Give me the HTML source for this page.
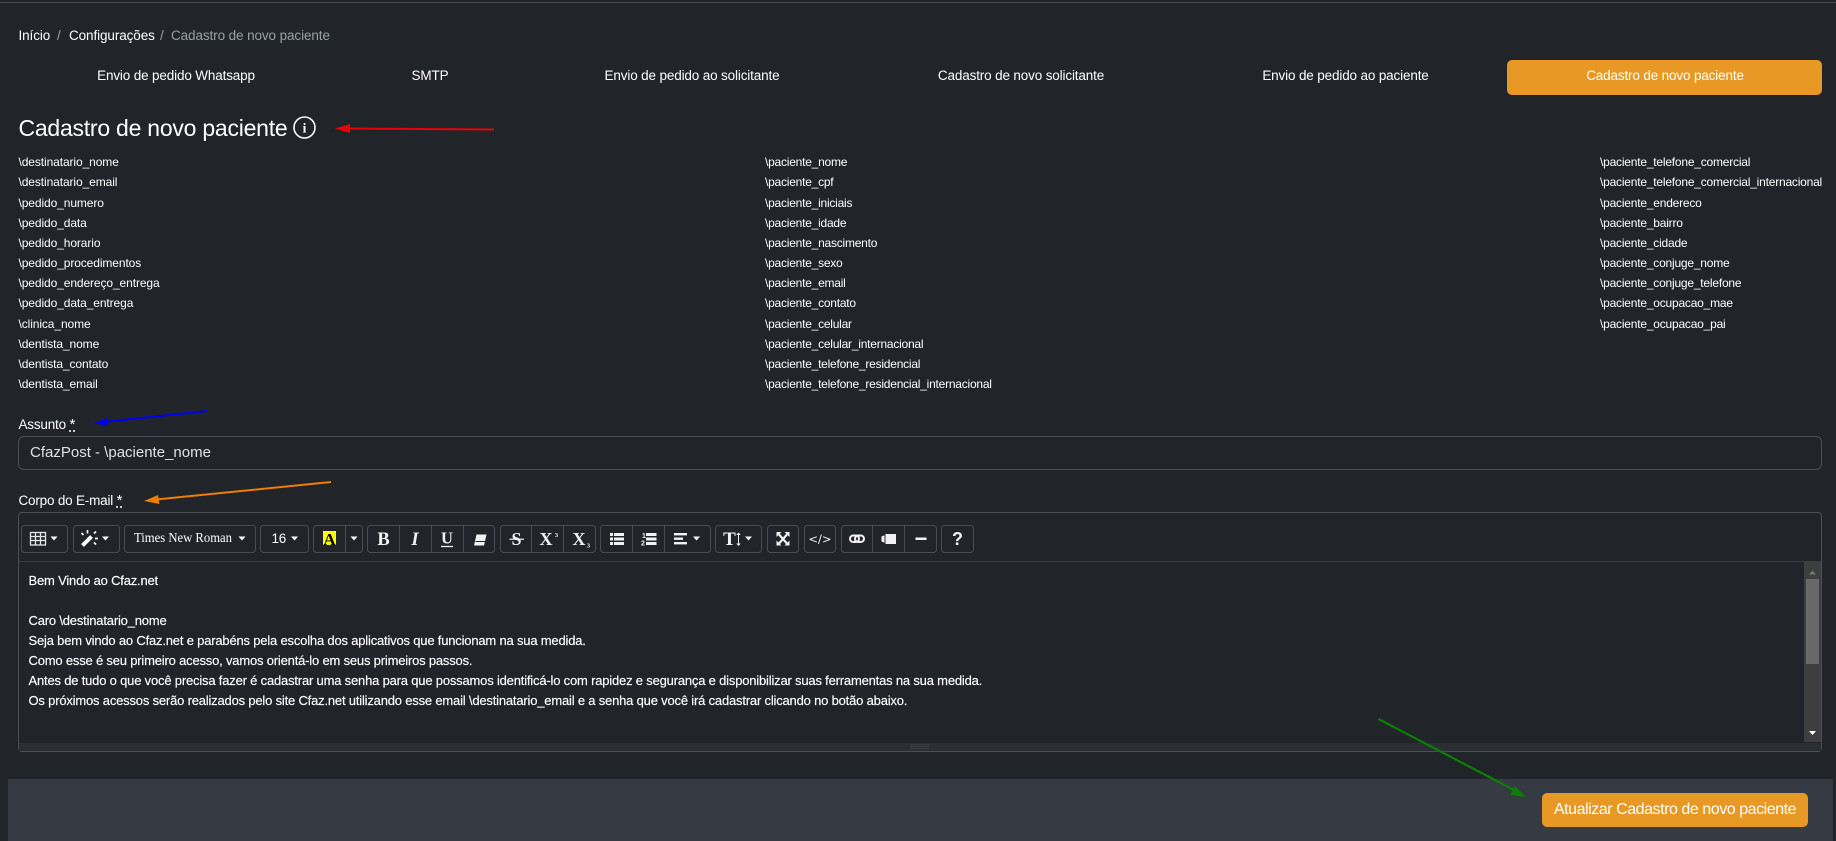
<!DOCTYPE html>
<html lang="pt-BR">
<head>
<meta charset="utf-8">
<title>Cadastro de novo paciente</title>
<style>
html,body{margin:0;padding:0;width:1836px;height:841px;overflow:hidden;background:#212529;color:#fff;font-family:"Liberation Sans",sans-serif}
.a{position:absolute;white-space:nowrap}
.c{transform:translateX(-50%)}
.crumb{top:26px;font-size:13.5px;line-height:20px;letter-spacing:-.1px}
.tab{top:65.500px;font-size:13.5px;line-height:20px;letter-spacing:-.15px}
.v{font-size:12px;line-height:20px;letter-spacing:-.1px}
.v2{letter-spacing:-.23px}
.v3{letter-spacing:-.21px}
.e{left:28.500px;font-size:13px;line-height:20px;letter-spacing:-.19px;-webkit-text-stroke:.15px #fff}
abbr{text-decoration:underline dotted;text-underline-offset:2px;font-size:15px}
.l{left:18.500px;font-size:13.5px;line-height:20px;letter-spacing:-.2px}
</style>
</head>
<body>
<div class="a" style="left:0;top:2px;width:1836px;height:1px;background:#4a4d52"></div>

<div class="a crumb" style="left:18.5px">Início</div>
<div class="a crumb" style="left:57px;color:#9aa0a6">/</div>
<div class="a crumb" style="left:69px">Configurações</div>
<div class="a crumb" style="left:160px;color:#9aa0a6">/</div>
<div class="a crumb" style="left:171px;color:#9aa0a6">Cadastro de novo paciente</div>

<div class="a tab c" style="left:176px">Envio de pedido Whatsapp</div>
<div class="a tab c" style="left:430px">SMTP</div>
<div class="a tab c" style="left:692px">Envio de pedido ao solicitante</div>
<div class="a tab c" style="left:1021px">Cadastro de novo solicitante</div>
<div class="a tab c" style="left:1345.5px">Envio de pedido ao paciente</div>
<div class="a" style="left:1507px;top:60px;width:315px;height:35px;background:#e79825;border-radius:5px"></div>
<div class="a tab c" style="left:1665px">Cadastro de novo paciente</div>

<div class="a" style="left:18.5px;top:114px;font-size:23px;line-height:28px;letter-spacing:-.24px">Cadastro de novo paciente</div>

<div class="a v" style="left:18.5px;top:152px">\destinatario_nome</div>
<div class="a v" style="left:18.5px;top:172px">\destinatario_email</div>
<div class="a v" style="left:18.5px;top:193px">\pedido_numero</div>
<div class="a v" style="left:18.5px;top:213px">\pedido_data</div>
<div class="a v" style="left:18.5px;top:233px">\pedido_horario</div>
<div class="a v" style="left:18.5px;top:253px">\pedido_procedimentos</div>
<div class="a v" style="left:18.5px;top:273px">\pedido_endereço_entrega</div>
<div class="a v" style="left:18.5px;top:293px">\pedido_data_entrega</div>
<div class="a v" style="left:18.5px;top:314px">\clinica_nome</div>
<div class="a v" style="left:18.5px;top:334px">\dentista_nome</div>
<div class="a v" style="left:18.5px;top:354px">\dentista_contato</div>
<div class="a v" style="left:18.5px;top:374px">\dentista_email</div>

<div class="a v v2" style="left:765px;top:152px">\paciente_nome</div>
<div class="a v v2" style="left:765px;top:172px">\paciente_cpf</div>
<div class="a v v2" style="left:765px;top:193px">\paciente_iniciais</div>
<div class="a v v2" style="left:765px;top:213px">\paciente_idade</div>
<div class="a v v2" style="left:765px;top:233px">\paciente_nascimento</div>
<div class="a v v2" style="left:765px;top:253px">\paciente_sexo</div>
<div class="a v v2" style="left:765px;top:273px">\paciente_email</div>
<div class="a v v2" style="left:765px;top:293px">\paciente_contato</div>
<div class="a v v2" style="left:765px;top:314px">\paciente_celular</div>
<div class="a v v2" style="left:765px;top:334px">\paciente_celular_internacional</div>
<div class="a v v2" style="left:765px;top:354px">\paciente_telefone_residencial</div>
<div class="a v v2" style="left:765px;top:374px">\paciente_telefone_residencial_internacional</div>

<div class="a v v3" style="left:1600px;top:152px">\paciente_telefone_comercial</div>
<div class="a v v3" style="left:1600px;top:172px">\paciente_telefone_comercial_internacional</div>
<div class="a v v3" style="left:1600px;top:193px">\paciente_endereco</div>
<div class="a v v3" style="left:1600px;top:213px">\paciente_bairro</div>
<div class="a v v3" style="left:1600px;top:233px">\paciente_cidade</div>
<div class="a v v3" style="left:1600px;top:253px">\paciente_conjuge_nome</div>
<div class="a v v3" style="left:1600px;top:273px">\paciente_conjuge_telefone</div>
<div class="a v v3" style="left:1600px;top:293px">\paciente_ocupacao_mae</div>
<div class="a v v3" style="left:1600px;top:314px">\paciente_ocupacao_pai</div>

<div class="a l" style="top:415px">Assunto <abbr>*</abbr></div>
<div class="a" style="left:18px;top:436px;width:1802px;height:32px;border:1px solid #495057;border-radius:6px"></div>
<div class="a" style="left:30px;top:442px;font-size:15px;line-height:22px;color:#dee2e6">CfazPost - \paciente_nome</div>

<div class="a l" style="top:491px">Corpo do E-mail <abbr>*</abbr></div>

<!-- editor frame -->
<div class="a" style="left:18px;top:512px;width:1802px;height:238px;border:1px solid #495057;border-radius:4px"></div>
<div class="a" style="left:19px;top:561px;width:1802px;height:1px;background:#3a3e44"></div>
<div class="a" style="left:19px;top:743px;width:1802px;height:8px;background:#2b2e33"></div>
<div class="a" style="left:1804px;top:562px;width:17px;height:180px;background:#3e3e3e"></div>
<div class="a" style="left:1806px;top:579px;width:13px;height:85px;background:#686868"></div>

<div class="a e" style="top:571px">Bem Vindo ao Cfaz.net</div>
<div class="a e" style="top:611px">Caro \destinatario_nome</div>
<div class="a e" style="top:631px">Seja bem vindo ao Cfaz.net e parabéns pela escolha dos aplicativos que funcionam na sua medida.</div>
<div class="a e" style="top:651px">Como esse é seu primeiro acesso, vamos orientá-lo em seus primeiros passos.</div>
<div class="a e" style="top:671px">Antes de tudo o que você precisa fazer é cadastrar uma senha para que possamos identificá-lo com rapidez e segurança e disponibilizar suas ferramentas na sua medida.</div>
<div class="a e" style="top:691px">Os próximos acessos serão realizados pelo site Cfaz.net utilizando esse email \destinatario_email e a senha que você irá cadastrar clicando no botão abaixo.</div>

<!-- footer -->
<div class="a" style="left:8px;top:779px;width:1825px;height:62px;background:#363a42"></div>
<div class="a" style="left:1542px;top:793px;width:266px;height:34px;background:#e79825;border-radius:5px"></div>
<div class="a c" style="left:1675px;top:799px;font-size:16px;line-height:22px;letter-spacing:-.45px">Atualizar Cadastro de novo paciente</div>

<!-- toolbar, icons, arrows -->
<svg class="a" style="left:0;top:0" width="1836" height="841" viewBox="0 0 1836 841" xmlns="http://www.w3.org/2000/svg">
<!-- info icon -->
<circle cx="304.500" cy="127.500" r="10.500" fill="none" stroke="#fff" stroke-width="1.600"/>
<text x="304.500" y="132.500" text-anchor="middle" font-family="Liberation Serif,serif" font-weight="700" font-size="13.500" fill="#fff">i</text>

<!-- toolbar button outlines -->
<g fill="none" stroke="#494d52" stroke-width="1">
<rect x="21.500" y="525.500" width="46" height="27" rx="3"/>
<rect x="73.500" y="525.500" width="46" height="27" rx="3"/>
<rect x="124.500" y="525.500" width="131" height="27" rx="3"/>
<rect x="260.500" y="525.500" width="48" height="27" rx="3"/>
<rect x="313.500" y="525.500" width="49" height="27" rx="3"/><path d="M345.500 525.500v27"/>
<rect x="367.500" y="525.500" width="127" height="27" rx="3"/><path d="M399.500 525.500v27M431.500 525.500v27M463.500 525.500v27"/>
<rect x="500.500" y="525.500" width="95" height="27" rx="3"/><path d="M531.500 525.500v27M563.500 525.500v27"/>
<rect x="600.500" y="525.500" width="110" height="27" rx="3"/><path d="M632.500 525.500v27M664.500 525.500v27"/>
<rect x="715.500" y="525.500" width="46" height="27" rx="3"/>
<rect x="767.500" y="525.500" width="31" height="27" rx="3"/>
<rect x="804.500" y="525.500" width="31" height="27" rx="3"/>
<rect x="841.500" y="525.500" width="95" height="27" rx="3"/><path d="M872.500 525.500v27M904.500 525.500v27"/>
<rect x="941.500" y="525.500" width="32" height="27" rx="3"/>
</g>

<!-- carets -->
<g fill="#fff">
<path d="M50.500 536.500h7l-3.500 4z"/>
<path d="M102 536.500h7l-3.500 4z"/>
<path d="M238.500 536.500h7l-3.500 4z"/>
<path d="M291 536.500h7l-3.500 4z"/>
<path d="M350.500 536.500h7l-3.500 4z"/>
<path d="M693 536.500h7l-3.500 4z"/>
<path d="M745 536.500h7l-3.500 4z"/>
</g>

<!-- table -->
<g fill="none" stroke="#e6e6e6" stroke-width="1.300">
<rect x="30.500" y="532.500" width="15" height="12.500"/>
<path d="M30.500 536.500h15M30.500 540.500h15M35.500 532.500v12.500M40.500 532.500v12.500"/>
</g>
<!-- wand -->
<g fill="none" stroke="#fff" stroke-width="1.500">
<path d="M82.500 545.500l9-9" stroke-width="4"/>
<path d="M87.500 530v3.500M96 531.500l-2 2M98 538.500h-3M96 544.500l-2-2M81.500 533l2 2" stroke-width="1.700"/>
</g>
<!-- font names -->
<text x="134" y="542" font-family="Liberation Serif,serif" font-size="14" fill="#fff" textLength="98" lengthAdjust="spacingAndGlyphs">Times New Roman</text>
<text x="271.500" y="543" font-family="Liberation Sans,sans-serif" font-size="13.500" fill="#fff" letter-spacing="-.2">16</text>
<!-- highlight A -->
<rect x="323" y="531" width="13" height="14" fill="#ff0"/>
<text x="329.500" y="545" text-anchor="middle" font-family="Liberation Serif,serif" font-weight="700" font-size="17" fill="#000">A</text>
<!-- B I U -->
<g font-family="Liberation Serif,serif" font-weight="700" fill="#f2f2f2" text-anchor="middle">
<text x="383.500" y="545" font-size="18.500">B</text>
<text x="415" y="545" font-size="18.500" font-style="italic">I</text>
<text x="447" y="543.500" font-size="16.500">U</text>
<text x="516.500" y="545" font-size="18">S</text>
<text x="546" y="545" font-size="18">X</text>
<text x="579" y="545" font-size="18">X</text>
<text x="556.500" y="537" font-size="6.500">3</text>
<text x="588.500" y="547.500" font-size="6.500">3</text>
</g>
<path d="M441 546.500h12" stroke="#f2f2f2" stroke-width="1.300"/>
<path d="M509.500 539.200h14.500" stroke="#f2f2f2" stroke-width="1.200"/>
<!-- eraser -->
<path d="M474 545.500l2.500-11h10l-2.500 11z" fill="#f2f2f2"/>
<path d="M475.500 541.500h9.500" stroke="#212529" stroke-width="1"/>
<!-- ul -->
<g fill="#f2f2f2">
<rect x="610" y="533" width="3" height="3"/><rect x="610" y="537.500" width="3" height="3"/><rect x="610" y="542" width="3" height="3"/>
<rect x="614" y="533" width="10" height="3"/><rect x="614" y="537.500" width="10" height="3"/><rect x="614" y="542" width="10" height="3"/>
<rect x="646" y="533" width="10.500" height="3"/><rect x="646" y="537.500" width="10.500" height="3"/><rect x="646" y="542" width="10.500" height="3"/>
<rect x="674" y="533" width="13" height="2.400"/><rect x="674" y="537.500" width="9" height="2.400"/><rect x="674" y="542" width="13" height="2.400"/>
</g>
<text x="642" y="538" font-family="Liberation Sans,sans-serif" font-size="7" fill="#f2f2f2" font-weight="700">1</text>
<text x="641" y="545.500" font-family="Liberation Sans,sans-serif" font-size="7" fill="#f2f2f2" font-weight="700">2</text>
<!-- line height T -->
<text x="729.500" y="545" text-anchor="middle" font-family="Liberation Serif,serif" font-weight="700" font-size="19" fill="#f2f2f2">T</text>
<path d="M738.500 533.500v11" stroke="#f2f2f2" stroke-width="1"/>
<path d="M736.200 535l2.300-2.500 2.300 2.500zM736.200 543.500l2.300 2.500 2.300-2.500z" fill="#f2f2f2"/>
<!-- fullscreen -->
<g fill="#f2f2f2" stroke="none">
<path d="M776.500 532h5l-5 5zM789.500 532h-5l5 5zM776.500 545.500h5l-5-5zM789.500 545.500h-5l5-5z"/>
</g>
<path d="M779 534.500l8 9M787 534.500l-8 9" stroke="#f2f2f2" stroke-width="2.200" fill="none"/>
<!-- code -->
<text x="820" y="543" text-anchor="middle" font-family="DejaVu Sans,sans-serif" font-size="11.500" fill="#f2f2f2">&lt;/&gt;</text>
<!-- link -->
<g fill="none" stroke="#f2f2f2" stroke-width="2">
<rect x="850" y="535.500" width="9" height="6.500" rx="3.200"/>
<rect x="855" y="535.500" width="9" height="6.500" rx="3.200"/>
</g>
<!-- video -->
<path d="M881.500 536.500l3-1.200v7.400l-3-1.200z M885.500 534h10.500v10h-10.500z" fill="#f2f2f2"/>
<!-- hr -->
<rect x="915.500" y="537.500" width="11" height="2.500" fill="#f2f2f2"/>
<!-- help -->
<text x="957.500" y="545" text-anchor="middle" font-family="Liberation Sans,sans-serif" font-weight="700" font-size="18" fill="#f2f2f2">?</text>

<!-- scrollbar arrows -->
<path d="M1809 574.500h7l-3.500-4z" fill="#777"/>
<path d="M1809 731h7l-3.500 4z" fill="#fff"/>
<!-- resize grip -->
<path d="M910 744.500h19M910 746.500h19M910 748.500h19" stroke="#3a3e43" stroke-width="1"/>

<!-- annotation arrows -->
<path d="M494 129.500L345 128.500" stroke="#e8000b" stroke-width="2"/>
<path d="M335 128.500l15-4.500v9z" fill="#e8000b"/>
<path d="M207 411L104 422" stroke="#0000f0" stroke-width="2"/>
<path d="M94 423l13-5 1 8z" fill="#0000f0"/>
<path d="M331 482L156 499.500" stroke="#f07c00" stroke-width="2"/>
<path d="M144 501l14-6 1.500 9z" fill="#f07c00"/>
<path d="M1378.500 719L1514 790" stroke="#0a8000" stroke-width="2.200"/>
<path d="M1526 797l-16-2 5-9z" fill="#0a8000"/>
</svg>
</body>
</html>
